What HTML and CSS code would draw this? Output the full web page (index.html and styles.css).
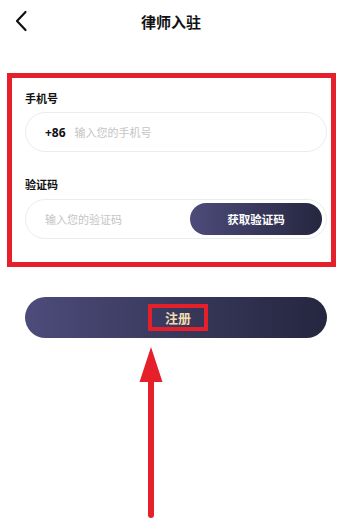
FILE: index.html
```html
<!DOCTYPE html>
<html lang="zh-CN">
<head>
<meta charset="utf-8">
<link rel="stylesheet" href="styles.css">
</head>
<body>
<div class="page">
  <header class="header">
    <svg class="back" width="14" height="22" viewBox="0 0 14 22"><path d="M10.5 2 L2 11 L10.5 20" fill="none" stroke="#111" stroke-width="2.2" stroke-linecap="round" stroke-linejoin="round"/></svg>
    <h1 class="title">律师入驻</h1>
  </header>
  <section class="form">
    <div class="label">手机号</div>
    <div class="field">
      <span class="prefix">+86</span>
      <span class="placeholder">输入您的手机号</span>
    </div>
    <div class="label label-2">验证码</div>
    <div class="field field-code">
      <span class="placeholder">输入您的验证码</span>
      <span class="code-btn">获取验证码</span>
    </div>
  </section>
  <div class="submit"><span class="submit-text">注册</span></div>
  <svg class="arrow" width="30" height="172" viewBox="0 0 30 172">
    <polygon points="15,0 3.5,35 26.5,35" fill="#e5202a"/>
    <line x1="15" y1="33" x2="15" y2="168" stroke="#e5202a" stroke-width="6" stroke-linecap="round"/>
  </svg>
</div>
</body>
</html>
```
FILE: styles.css
```css
* { box-sizing: border-box; }
html, body { margin: 0; padding: 0; background: #fff; }
body {
  font-family: "Noto Sans CJK SC", "Noto Sans", sans-serif;
  color: #111;
}
.page { width: 342px; height: 527px; overflow: hidden; }
.header {
  height: 44px;
  position: relative;
  display: flex;
  align-items: center;
  justify-content: center;
}
.back { position: absolute; left: 15px; top: 10px; }
.title {
  margin: 0;
  font-size: 15px;
  font-weight: 600;
  line-height: 20px;
}
.form {
  margin: 29px 0 0 7px;
  width: 329px;
  border: 5px solid #e5202a;
  padding: 12px 4px 23px 13px;
}
.label {
  font-size: 11px;
  font-weight: 700;
  line-height: 17px;
  margin-bottom: 5px;
}
.label-2 { margin-top: 24px; margin-bottom: 6px; }
.field {
  height: 40px;
  border: 1px solid #ececec;
  border-radius: 20px;
  display: flex;
  align-items: center;
  padding-left: 19px;
}
.prefix {
  font-size: 12px;
  font-weight: 700;
  margin-right: 9px;
  font-family: "Noto Sans", sans-serif;
}
.placeholder {
  font-size: 11px;
  color: #c4c4c4;
}
.field-code {
  justify-content: space-between;
  padding-right: 4px;
}
.code-btn {
  width: 132px;
  height: 32px;
  border-radius: 16px;
  background: linear-gradient(90deg, #4d4b7a, #25263f);
  color: #fff;
  font-size: 11.5px;
  font-weight: 700;
  display: flex;
  align-items: center;
  justify-content: center;
}
.submit {
  margin: 30px 0 0 25px;
  width: 302px;
  height: 41px;
  border-radius: 20.5px;
  background: linear-gradient(90deg, #4d4b7a, #25263f);
  display: flex;
  align-items: center;
  justify-content: center;
}
.submit-text {
  display: inline-block;
  width: 60px;
  height: 27px;
  border: 4px solid #e5202a;
  color: #f1dcae;
  font-size: 13px;
  font-weight: 700;
  line-height: 19px;
  text-align: center;
  margin-left: 4px;
}
.arrow { display: block; margin: 9px 0 0 136px; }
```
